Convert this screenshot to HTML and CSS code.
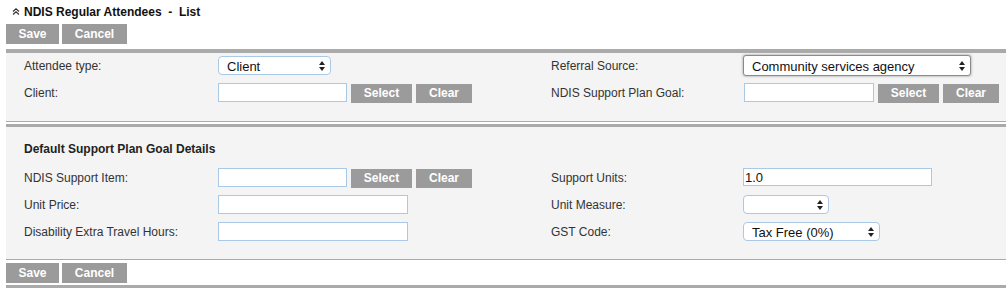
FILE: index.html
```html
<!DOCTYPE html>
<html lang="en">

<head>
    <meta charset="UTF-8">
    <title>NDIS Regular Attendees - List</title>
    <link rel="stylesheet" href="styles.css">
</head>

<body>
    <div class="page">
        <h1 class="title"><svg class="collapse" width="8" height="7" viewBox="0 0 8 7"><path d="M1 3.5 L4 0.8 L7 3.5 M1 6.5 L4 3.8 L7 6.5" fill="none" stroke="#333" stroke-width="1.2" /></svg><span>NDIS Regular Attendees&nbsp; - &nbsp;List</span></h1>

        <div class="actions">
            <button class="btn btn-save">Save</button>
            <button class="btn btn-cancel">Cancel</button>
        </div>

        <!-- Attendee -->
        <div class="panel panel-top">
            <div class="form-grid rows-top">
                <label>Attendee type:</label>
                <div class="field">
                    <span class="select-wrap sel-type">
                        <select><option>Client</option></select>
                        <svg class="arrows" width="6" height="10" viewBox="0 0 6 10"><path d="M0 4 L3 0 L6 4 Z M0 6 L3 10 L6 6 Z" fill="#222" /></svg>
                    </span>
                </div>
                <label>Referral Source:</label>
                <div class="field">
                    <span class="select-wrap sel-referral">
                        <select><option>Community services agency</option></select>
                        <svg class="arrows" width="6" height="10" viewBox="0 0 6 10"><path d="M0 4 L3 0 L6 4 Z M0 6 L3 10 L6 6 Z" fill="#222" /></svg>
                    </span>
                </div>

                <label>Client:</label>
                <div class="field">
                    <input type="text" class="input-short">
                    <button class="btn btn-small btn-select">Select</button>
                    <button class="btn btn-small btn-clear">Clear</button>
                </div>
                <label>NDIS Support Plan Goal:</label>
                <div class="field">
                    <input type="text" class="input-short input-goal">
                    <button class="btn btn-small btn-select">Select</button>
                    <button class="btn btn-small btn-clear">Clear</button>
                </div>
            </div>
        </div>

        <!-- Default goal details -->
        <div class="panel panel-details">
            <h2 class="section-title">Default Support Plan Goal Details</h2>
            <div class="form-grid rows-details">
                <label>NDIS Support Item:</label>
                <div class="field">
                    <input type="text" class="input-short">
                    <button class="btn btn-small btn-select">Select</button>
                    <button class="btn btn-small btn-clear">Clear</button>
                </div>
                <label>Support Units:</label>
                <div class="field">
                    <input type="text" class="input-units" value="1.0">
                </div>

                <label>Unit Price:</label>
                <div class="field">
                    <input type="text" class="input-wide">
                </div>
                <label>Unit Measure:</label>
                <div class="field">
                    <span class="select-wrap sel-measure">
                        <select><option></option></select>
                        <svg class="arrows" width="6" height="10" viewBox="0 0 6 10"><path d="M0 4 L3 0 L6 4 Z M0 6 L3 10 L6 6 Z" fill="#222" /></svg>
                    </span>
                </div>

                <label>Disability Extra Travel Hours:</label>
                <div class="field">
                    <input type="text" class="input-wide">
                </div>
                <label>GST Code:</label>
                <div class="field">
                    <span class="select-wrap sel-gst">
                        <select><option>Tax Free (0%)</option></select>
                        <svg class="arrows" width="6" height="10" viewBox="0 0 6 10"><path d="M0 4 L3 0 L6 4 Z M0 6 L3 10 L6 6 Z" fill="#222" /></svg>
                    </span>
                </div>
            </div>
        </div>

        <div class="actions actions-bottom">
            <button class="btn btn-save">Save</button>
            <button class="btn btn-cancel">Cancel</button>
        </div>
    </div>
</body>

</html>
```

FILE: styles.css
```css
/* Reset default */
body,
h1,
h2,
input,
select,
button {
    margin: 0;
    padding: 0;
    box-sizing: border-box;
    font-family: "Liberation Sans", Arial, Helvetica, sans-serif;
}

body {
    background-color: #fff;
    color: #333;
    font-size: 12px;
}

.page {
    padding-left: 6px;
}

/* Title */
.title {
    display: flex;
    align-items: center;
    height: 24px;
    padding: 0 0 1px 6px;
    font-size: 12px;
    line-height: 14px;
    font-weight: bold;
    color: #111;
}

.collapse {
    margin-right: 4px;
}

/* Buttons */
.actions {
    display: flex;
    gap: 3px;
}

.btn {
    height: 20px;
    background-color: #9b9b9b;
    color: #fff;
    border: none;
    font-size: 12px;
    font-weight: bold;
    line-height: 20px;
    cursor: pointer;
}

.btn-save {
    width: 53px;
}

.btn-cancel {
    width: 65px;
}

.btn-small {
    height: 19px;
    line-height: 19px;
    margin-left: 4px;
    margin-top: 1px;
}

.btn-select {
    width: 61px;
}

.btn-clear {
    width: 56px;
}

.actions-bottom {
    margin-top: 3px;
    padding-bottom: 2px;
    border-bottom: 3px solid #aaa;
}

/* Panels */
.panel {
    background-color: #f4f4f4;
    border-bottom: 1px solid #aaa;
    padding-left: 18px;
}

.panel-top {
    margin-top: 5px;
    border-top: 4px solid #aaa;
    padding-top: 3px;
    padding-bottom: 18px;
}

.panel-details {
    margin-top: 2px;
    border-top: 3px solid #aaa;
    padding-top: 15px;
    padding-bottom: 18px;
}

.section-title {
    font-size: 12px;
    font-weight: bold;
    line-height: 14px;
    margin-bottom: 12px;
    color: #222;
}

/* Form grid */
.form-grid {
    display: grid;
    grid-template-columns: 194px 333px 192px 1fr;
    align-items: center;
}

.rows-top {
    grid-auto-rows: 20px;
    row-gap: 7px;
}

.rows-details {
    grid-auto-rows: 19px;
    row-gap: 8px;
}

.form-grid label {
    color: #333;
}

.field {
    display: flex;
    align-items: flex-start;
    height: 100%;
}

/* Inputs */
input[type="text"] {
    height: 19px;
    background-color: #fff;
    border: 1px solid #a9c9e6;
    font-size: 12px;
    padding: 0 1px;
    color: #111;
}

.input-short {
    width: 129px;
}

.input-goal {
    width: 130px;
    margin-left: 1px;
}

.input-wide {
    width: 190px;
}

.input-units {
    width: 189px;
    height: 18px !important;
    font-size: 13px !important;
}

/* Selects */
.select-wrap {
    position: relative;
    display: inline-block;
}

.select-wrap select {
    -webkit-appearance: none;
    appearance: none;
    display: block;
    width: 100%;
    height: 19px;
    background-color: #fff;
    border: 1px solid #a9c9e6;
    border-radius: 4px;
    font-size: 13px;
    color: #111;
    padding: 1px 0 0 8px;
}

.select-wrap .arrows {
    position: absolute;
    right: 6px;
    top: 5px;
    pointer-events: none;
}

.sel-type {
    width: 113px;
}

.sel-referral {
    width: 228px;
    margin-top: -1px;
}

.sel-referral select {
    height: 21px;
    border-color: #8a8a8a;
    border-radius: 3px;
    box-shadow: 0 0 2px 1px #c8c8c8;
}

.sel-referral .arrows {
    top: 6px;
}

.sel-measure {
    width: 86px;
}

.sel-gst {
    width: 137px;
}
```
